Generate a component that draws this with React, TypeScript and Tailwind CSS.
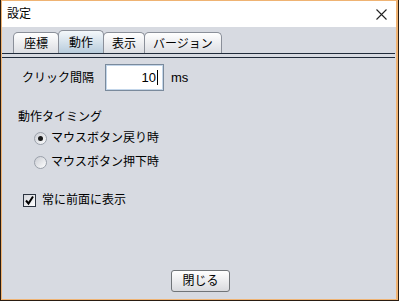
import React from 'react'

const font = { fontFamily: '"Liberation Sans", "Noto Sans CJK JP", sans-serif' }

function Tab({ label, width, selected }: { label: string; width: string; selected?: boolean }) {
  return (
    <div
      className={
        'flex items-center justify-center rounded-t-[5px] border-x border-t border-[#8a8f99] -ml-px first:ml-0 text-[12px] text-black ' +
        width +
        (selected
          ? ' h-[23px] bg-gradient-to-b from-[#f4f8fb] to-[#b8ccdc] relative z-10'
          : ' h-[21px] bg-gradient-to-b from-[#ffffff] to-[#dcdee3]')
      }
    >
      <span className="leading-none pt-px">{label}</span>
    </div>
  )
}

function Radio({ checked, label }: { checked?: boolean; label: string }) {
  return (
    <div className="flex items-center h-[16px]">
      <div className="w-[13px] h-[13px] rounded-full border border-[#9aa0aa] bg-gradient-to-br from-[#c9ccd3] to-[#ffffff] flex items-center justify-center">
        {checked && <div className="w-[5px] h-[5px] rounded-full bg-[#1a1a1a]" />}
      </div>
      <span className="ml-[4px] text-[12px] leading-none text-black">{label}</span>
    </div>
  )
}

export default function App() {
  return (
    <div className="w-[399px] h-[301px] bg-[#2a1d12] px-px pb-px" style={font}>
      <div className="w-full h-full flex flex-col border-t border-l border-r-2 border-b border-[#efb373]">
        {/* title bar */}
        <div className="h-[26px] bg-white flex items-center justify-between pl-[5px] pr-[9px]">
          <span className="text-[12px] text-black leading-none">設定</span>
          <svg width="11" height="11" viewBox="0 0 11 11">
            <path d="M0.5 0.5 L10.5 10.5 M10.5 0.5 L0.5 10.5" stroke="#222" strokeWidth="1.1" />
          </svg>
        </div>

        <div className="flex-1 bg-[#d7dae1] flex flex-col">
          {/* tabs */}
          <div className="h-[26px] pl-[11px] flex items-end">
            <Tab label="座標" width="w-[46px]" />
            <Tab label="動作" width="w-[46px]" selected />
            <Tab label="表示" width="w-[42px]" />
            <Tab label="バージョン" width="w-[78px]" />
          </div>
          <div className="h-[5px] border-y border-[#1f2a3a] mr-[1px]" />

          {/* content */}
          <div className="flex-1 flex flex-col pt-[6px]">
            <div className="flex items-center pl-[20px] h-[27px]">
              <span className="text-[12px] text-black leading-none w-[83px]">クリック間隔</span>
              <div className="w-[59px] h-[27px] border border-[#7a8a9c] bg-white shadow-[inset_0_0_0_1px_#c3d6ea] flex items-center justify-end pr-[5px]">
                <span className="text-[13px] text-black leading-none">10</span>
                <div className="w-px h-[15px] bg-black ml-px" />
              </div>
              <span className="ml-[7px] text-[13px] text-black leading-none">ms</span>
            </div>

            <div className="mt-[18px] pl-[16px] h-[16px] flex items-center">
              <span className="text-[12px] text-black leading-none">動作タイミング</span>
            </div>

            <div className="mt-[5px] pl-[32px] flex flex-col gap-[8px]">
              <Radio checked label="マウスボタン戻り時" />
              <Radio label="マウスボタン押下時" />
            </div>

            <div className="mt-[22px] pl-[21px] flex items-center h-[16px]">
              <div className="w-[13px] h-[13px] border border-[#2c3440] bg-gradient-to-br from-[#d4d6dc] to-[#ffffff] flex items-center justify-center">
                <svg width="11" height="11" viewBox="0 0 11 11">
                  <path d="M2 5.5 L4.5 8.5 L9 1.5" stroke="#000" strokeWidth="2" fill="none" />
                </svg>
              </div>
              <span className="ml-[6px] text-[12px] text-black leading-none">常に前面に表示</span>
            </div>

            <div className="flex-1" />

            <div className="flex justify-center pb-[7px] pl-[3px]">
              <button className="w-[59px] h-[22px] rounded-[3px] border border-[#707478] bg-gradient-to-b from-[#ffffff] to-[#d9dade] text-[12px] text-black leading-none">
                閉じる
              </button>
            </div>
          </div>
        </div>
      </div>
    </div>
  )
}
